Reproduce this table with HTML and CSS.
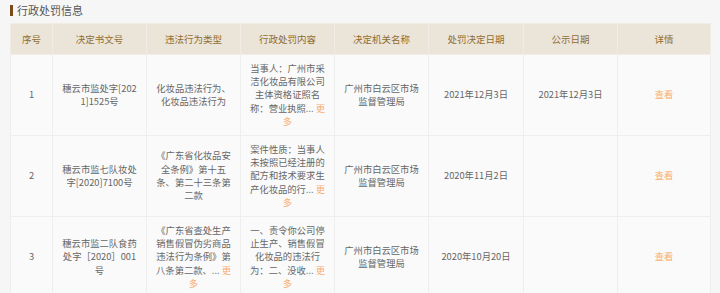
FILE: index.html
```html
<!DOCTYPE html>
<html lang="zh-CN">
<head>
<meta charset="utf-8">
<title>行政处罚信息</title>
<link rel="stylesheet" href="styles.css">
</head>
<body>
<div class="page">
  <div class="title"><span class="bar"></span><span class="title-text">行政处罚信息</span></div>
  <table class="grid">
    <colgroup>
      <col class="c1"><col class="c2"><col class="c3"><col class="c4"><col class="c5"><col class="c6"><col class="c7"><col class="c8">
    </colgroup>
    <thead>
      <tr>
        <th>序号</th><th>决定书文号</th><th>违法行为类型</th><th>行政处罚内容</th><th>决定机关名称</th><th>处罚决定日期</th><th>公示日期</th><th>详情</th>
      </tr>
    </thead>
    <tbody>
      <tr>
        <td>1</td>
        <td>穗云市监处字[202<br>1]1525号</td>
        <td>化妆品违法行为、<br>化妆品违法行为</td>
        <td>当事人：广州市采<br>洁化妆品有限公司<br>主体资格证照名<br>称：营业执照... <span class="more">更<br>多</span></td>
        <td>广州市白云区市场<br>监督管理局</td>
        <td>2021年12月3日</td>
        <td>2021年12月3日</td>
        <td><span class="link">查看</span></td>
      </tr>
      <tr>
        <td>2</td>
        <td>穗云市监七队妆处<br>字[2020]7100号</td>
        <td>《广东省化妆品安<br>全条例》第十五<br>条、第二十三条第<br>二款</td>
        <td>案件性质：当事人<br>未按照已经注册的<br>配方和技术要求生<br>产化妆品的行... <span class="more">更<br>多</span></td>
        <td>广州市白云区市场<br>监督管理局</td>
        <td>2020年11月2日</td>
        <td></td>
        <td><span class="link">查看</span></td>
      </tr>
      <tr>
        <td>3</td>
        <td>穗云市监二队食药<br>处字［2020］001<br>号</td>
        <td>《广东省查处生产<br>销售假冒伪劣商品<br>违法行为条例》第<br>八条第二款、... <span class="more">更<br>多</span></td>
        <td>一、责令你公司停<br>止生产、销售假冒<br>化妆品的违法行<br>为：二、没收... <span class="more">更<br>多</span></td>
        <td>广州市白云区市场<br>监督管理局</td>
        <td>2020年10月20日</td>
        <td></td>
        <td><span class="link">查看</span></td>
      </tr>
    </tbody>
  </table>
</div>
</body>
</html>
```
FILE: styles.css
```css
html, body {
  margin: 0;
  padding: 0;
  background: #f6f6f6;
}
body {
  font-family: "Noto Sans CJK SC", "Noto Sans", sans-serif;
  color: #666;
}
.page {
  padding: 4px 10px 0 10px;
}
.title {
  display: flex;
  align-items: center;
  height: 13px;
  gap: 4px;
  margin-bottom: 6px;
}
.bar {
  width: 3px;
  height: 11px;
  background: #7b4a1c;
}
.title-text {
  font-size: 11px;
  line-height: 13px;
  color: #555;
}
.grid {
  width: 700px;
  border-collapse: collapse;
  table-layout: fixed;
  background: #fafafa;
}
.c1 { width: 42px; }
.c2 { width: 94px; }
.c3 { width: 94px; }
.c4 { width: 94px; }
.c5 { width: 94px; }
.c6 { width: 95px; }
.c7 { width: 94px; }
.c8 { width: 93px; }
.grid th {
  background: #ebe4d9;
  color: #8f6d30;
  font-weight: normal;
  font-size: 9.5px;
  height: 30px;
  padding: 0;
  border: 1px solid #f1ede6;
  text-align: center;
  vertical-align: middle;
}
.grid td {
  font-size: 9.3px;
  line-height: 13.4px;
  padding: 6.5px 2px;
  border: 1px solid #eeeeee;
  text-align: center;
  vertical-align: middle;
  white-space: nowrap;
  color: #666;
}
.more, .link {
  color: #f9ad6e;
}
```
